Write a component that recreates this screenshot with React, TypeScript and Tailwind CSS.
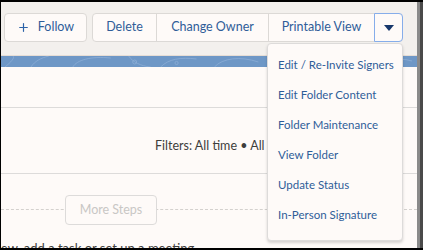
import { Plus } from "lucide-react"

const menuItems = [
  "Edit / Re-Invite Signers",
  "Edit Folder Content",
  "Folder Maintenance",
  "View Folder",
  "Update Status",
  "In-Person Signature",
]

function Swirls() {
  return (
    <svg className="h-full w-full" viewBox="0 0 417 11" preserveAspectRatio="none">
      <g fill="none" stroke="#94b4da" strokeWidth="0.8" opacity="0.8">
        <path d="M4 11 C10 6 14 2 12 0" />
        <path d="M30 11 C34 5 40 2 48 0" />
        <path d="M72 11 C76 4 90 0 110 2" />
        <path d="M128 0 C132 6 140 10 150 11" />
        <circle cx="134" cy="6" r="2" />
        <path d="M160 11 C168 3 180 1 196 3" />
        <circle cx="176" cy="7" r="1.6" />
        <path d="M214 11 C222 2 240 0 258 6" />
        <path d="M300 0 C310 8 330 10 350 4" />
        <path d="M380 11 C385 4 398 1 412 5" />
      </g>
    </svg>
  )
}

export default function App() {
  return (
    <div
      className="relative flex h-[250px] w-[423px] overflow-hidden border-t-2 border-l border-b-2 border-black bg-[#fefaf8] text-[12px]"
      style={{ fontFamily: "Lato, 'Noto Sans', sans-serif" }}
    >
      <div className="flex min-w-0 flex-1 flex-col">
        {/* header */}
        <div className="flex h-[54px] shrink-0 items-start gap-[5px] border-b border-[#e6ddd5] bg-[#f3f0ed] pl-[3px] pt-[11px]">
          <button className="flex h-[29px] w-[83px] items-center justify-center gap-[8px] rounded-[4px] border border-[#dcd9d6] bg-[#fefaf8] text-[12.5px] text-[#2f5d98]">
            <Plus className="h-[13px] w-[13px]" strokeWidth={2.2} color="#2d63a8" />
            <span>Follow</span>
          </button>
          <div className="flex h-[29px] rounded-[4px] border border-[#dcd9d6] bg-[#fefaf8] text-[12.5px] text-[#2f5d98]">
            <span className="flex w-[64px] items-center justify-center border-r border-[#dcd9d6]">Delete</span>
            <span className="flex w-[112px] items-center justify-center border-r border-[#dcd9d6]">Change Owner</span>
            <span className="flex w-[105px] items-center justify-center">Printable View</span>
            <span className="-my-px -mr-px flex w-[29px] items-center justify-center rounded-r-[4px] border border-[#86adea] bg-[#fefaf8]">
              <svg width="10" height="6" viewBox="0 0 10 6">
                <path d="M0 0 H10 L5 6 Z" fill="#17376b" />
              </svg>
            </span>
          </div>
        </div>
        {/* banner strip */}
        <div className="h-[11px] shrink-0 bg-[#6e97c6]">
          <Swirls />
        </div>
        {/* content */}
        <div className="h-[41px] shrink-0 border-b border-[#dddbda]" />
        <div className="flex h-[66px] shrink-0 items-center overflow-hidden whitespace-nowrap border-b border-[#dddbda] pl-[154px] pt-[12px] text-[12.5px] text-[#3e3e3c]">
          Filters: All time • All activities • All types
        </div>
        <div className="relative mt-[21px] flex h-[30px] shrink-0 items-center">
          <div className="absolute inset-x-0 top-[14px] border-t border-dashed border-[#d4d1ce]" />
          <button className="relative ml-[64px] flex h-[30px] w-[92px] items-center justify-center rounded-[4px] border border-[#dddbda] bg-[#fefaf8] text-[12.5px] text-[#c9c7c5]">
            More Steps
          </button>
        </div>
        <div className="mt-[14px] -ml-[10px] shrink-0 whitespace-nowrap text-[13px] leading-[18px] text-[#3e3e3c]">
          view, add a task or set up a meeting.
        </div>
      </div>
      <div className="flex w-[6px] shrink-0">
        <div className="w-[3px] bg-[#8a8a8a]" />
        <div className="w-[3px] bg-[#4a4a4a]" />
      </div>

      {/* dropdown menu */}
      <div className="absolute left-[266px] top-[41px] w-[136px] rounded-[4px] border border-[#dddbda] bg-[#fefaf8] pb-[10px] pt-[6px] shadow-[0_2px_3px_rgba(0,0,0,0.16)]">
        {menuItems.map((item) => (
          <div key={item} className="flex h-[30px] items-center whitespace-nowrap pl-[10px] text-[11.5px] text-[#2f5d98]">
            {item}
          </div>
        ))}
      </div>
    </div>
  )
}
